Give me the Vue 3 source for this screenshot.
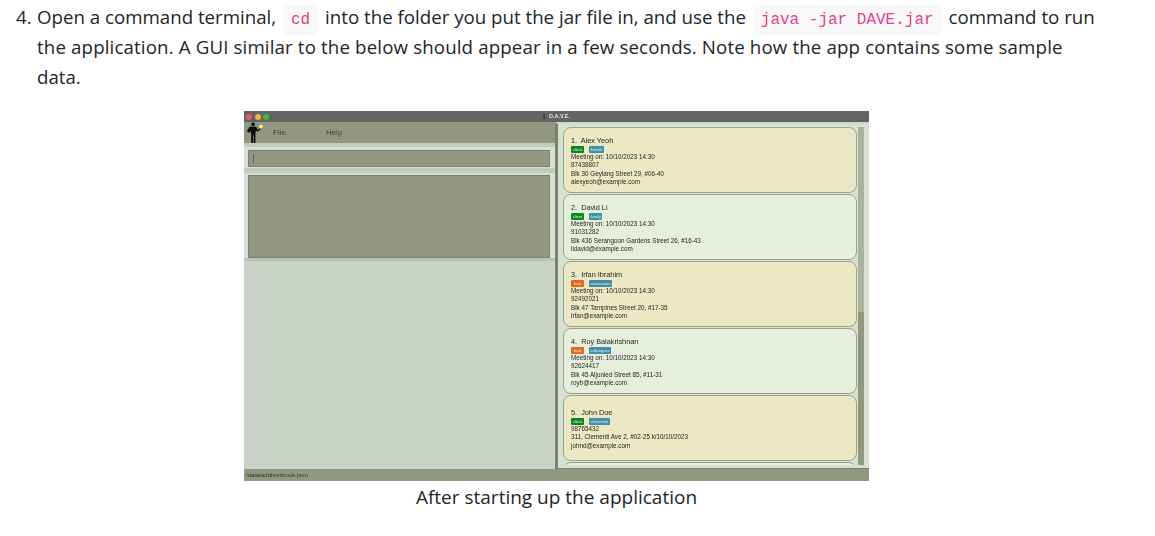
<script setup>
const cards = [
  { name: '1.  Alex Yeoh', tags: [['client', 'green'], ['friends', 'blue']], meeting: true, phone: '87438807', addr: 'Blk 30 Geylang Street 29, #06-40', mail: 'alexyeoh@example.com' },
  { name: '2.  David Li', tags: [['client', 'green'], ['family', 'blue']], meeting: true, phone: '91031282', addr: 'Blk 436 Serangoon Gardens Street 26, #16-43', mail: 'lidavid@example.com' },
  { name: '3.  Irfan Ibrahim', tags: [['lead', 'orange'], ['classmates', 'blue']], meeting: true, phone: '92492021', addr: 'Blk 47 Tampines Street 20, #17-35', mail: 'irfan@example.com' },
  { name: '4.  Roy Balakrishnan', tags: [['lead', 'orange'], ['colleagues', 'blue']], meeting: true, phone: '92624417', addr: 'Blk 45 Aljunied Street 85, #11-31', mail: 'royb@example.com' },
  { name: '5.  John Doe', tags: [['client', 'green'], ['classmate', 'blue']], meeting: false, phone: '98765432', addr: '311, Clementi Ave 2, #02-25 k/10/10/2023', mail: 'johnd@example.com' },
]
</script>

<template>
  <main class="page">
    <div class="step">
      <span class="num">4.</span>
      <p class="text">
        Open a command terminal, <code>cd</code> into the folder you put the jar file in, and use the
        <code>java -jar DAVE.jar</code> command to run<br />
        <span class="wide">the application. A GUI similar to the below should appear in a few seconds. Note how the app contains some sample</span><br />
        data.
      </p>
    </div>

    <figure class="fig">
      <div class="app">
        <div class="titlebar">
          <span class="dot red"></span>
          <span class="dot yellow"></span>
          <span class="dot green"></span>
          <svg class="tinylogo" viewBox="0 0 18 22" aria-hidden="true">
            <circle cx="8" cy="3" r="2.500" fill="#444" />
            <path d="M4 6h8v7l-1 9H5l-1-9z" fill="#444" />
          </svg>
          <span class="wintitle">D.A.V.E.</span>
        </div>

        <div class="body">
          <div class="left">
            <div class="menu">
              <svg class="logo" viewBox="0 0 18 22" aria-hidden="true">
                <circle cx="7.500" cy="2.400" r="1.900" fill="#0c0c0c" />
                <path d="M3.800 5h7.200l1.200 3.200 2.800-1.700.6 1-3.600 2.700-1.500-1.200-.5 3.500V22H8.200v-8h-.8v8H5.500v-9.500l-.5-3-1.800 2L1 9.300z" fill="#0c0c0c" />
                <circle cx="15.800" cy="4.600" r="2" fill="#f7e48a" />
              </svg>
              <span class="menuitem file">File</span>
              <span class="menuitem">Help</span>
            </div>
            <div class="band first-band">
              <div class="cmd"><span class="caret"></span></div>
            </div>
            <div class="band result-band">
              <div class="result"></div>
            </div>
            <div class="empty"></div>
          </div>

          <div class="right">
            <div class="list">
              <div v-for="(c, i) in cards" :key="c.name" class="card" :class="i % 2 ? 'even' : 'odd'">
                <div class="name">{{ c.name }}</div>
                <div class="tags">
                  <span v-for="t in c.tags" :key="t[0]" class="tag" :class="t[1]">{{ t[0] }}</span>
                </div>
                <div v-if="c.meeting" class="line">Meeting on: 10/10/2023 14:30</div>
                <div class="line">{{ c.phone }}</div>
                <div class="line">{{ c.addr }}</div>
                <div class="line">{{ c.mail }}</div>
              </div>
              <div class="card even"></div>
            </div>
            <div class="track"><div class="thumb"></div></div>
          </div>
        </div>

        <div class="status">/data/addressbook.json</div>
      </div>
      <figcaption class="cap">After starting up the application</figcaption>
    </figure>
  </main>
</template>

<style>
body {
  background: #fff;
}
</style>

<style scoped>
.page {
  width: 1155px;
  height: 536px;
  overflow: hidden;
  font-family: "Open Sans", "Noto Sans", sans-serif;
  color: #212529;
}
.step {
  position: relative;
  padding: 2px 0 0 37px;
  width: 1062px;
}
.num {
  position: absolute;
  left: 16px;
  top: 2px;
  font-size: 18.700px;
  line-height: 30px;
}
.text {
  margin: 0;
  font-size: 18.700px;
  line-height: 30px;
}
.wide {
  letter-spacing: 0.14px;
}
code {
  font-family: "Liberation Mono", monospace;
  font-size: 16px;
  line-height: 20px;
  color: #e83e8c;
  background: #f8f8f8;
  border-radius: 4px;
  padding: 6px 8px;
  margin: 0 2px;
}
.fig {
  margin: 19px 0 0;
  width: 1113px;
  display: flex;
  flex-direction: column;
  align-items: center;
}
.app {
  width: 625px;
  height: 370px;
  display: flex;
  flex-direction: column;
  font-family: "Liberation Sans", sans-serif;
  background: #c8d2c6;
  filter: blur(0.5px);
}
.titlebar {
  position: relative;
  height: 11px;
  flex: none;
  display: flex;
  align-items: center;
  gap: 2.500px;
  padding-left: 2px;
  background: #636363;
}
.dot {
  width: 6px;
  height: 6px;
  border-radius: 50%;
}
.red { background: #f05a55; }
.yellow { background: #f3b32c; }
.green { background: #32c03f; }
.tinylogo {
  position: absolute;
  left: 298px;
  top: 2px;
  width: 5px;
  height: 7px;
}
.wintitle {
  position: absolute;
  left: 305px;
  top: 2px;
  font-size: 5.500px;
  font-weight: 700;
  line-height: 7px;
  color: #e2e2e2;
}
.body {
  flex: 1;
  min-height: 0;
  display: flex;
}
.left {
  width: 311px;
  display: flex;
  flex-direction: column;
}
.menu {
  height: 21px;
  flex: none;
  display: flex;
  align-items: center;
  background: #92987f;
}
.logo {
  width: 17px;
  height: 21px;
  margin-left: 2px;
  flex: none;
}
.menuitem {
  font-size: 8px;
  color: #3d4036;
  margin-left: 40px;
}
.menuitem.file {
  margin-left: 10px;
}
.band {
  background: #d6e0d3;
  padding: 2px 5px 1px 4px;
}
.first-band {
  border-top: 4px solid #c0ccbd;
  padding-top: 3px;
}
.cmd {
  height: 17px;
  background: #92987f;
  border: 1px solid #788070;
  display: flex;
  align-items: center;
  padding-left: 4px;
  box-sizing: border-box;
}
.caret {
  width: 1px;
  height: 9px;
  background: #5d6255;
}
.result-band {
  padding-top: 2px;
  padding-bottom: 0;
  border-top: 5px solid #c0ccbd;
  border-bottom: 3px solid #b8c4b5;
}
.result {
  height: 83px;
  background: #92987f;
  border: 1px solid #788070;
  box-sizing: border-box;
}
.empty {
  flex: 1;
}
.right {
  flex: 1;
  min-width: 0;
  display: flex;
  background: #d6e0d3;
  border-left: 3px solid #7c826d;
  border-top: 2px solid #cfd9cc;
  border-bottom: 1px solid #7c826d;
  padding: 3px 0 3px 5px;
}
.list {
  width: 294px;
  flex: none;
  display: flex;
  flex-direction: column;
  gap: 1px;
  overflow: hidden;
}
.card {
  height: 66px;
  flex: none;
  box-sizing: border-box;
  border: 1px solid #9ea48c;
  border-radius: 8px;
  padding: 2px 7px 0;
  display: flex;
  flex-direction: column;
  justify-content: center;
  color: #262626;
}
.odd { background: #ece8c4; }
.even { background: #e5efdb; }
.name {
  font-size: 7.300px;
  line-height: 9px;
  margin-bottom: 1px;
  white-space: pre;
}
.tags {
  display: flex;
  gap: 5px;
  height: 7px;
  flex: none;
}
.tag {
  font-size: 4px;
  line-height: 7px;
  padding: 0 1.500px;
  border-radius: 1px;
  color: #dfeedf;
  min-width: 10px;
  text-align: center;
}
.tag.green { background: #0a8a1e; }
.tag.orange { background: #e8671c; }
.tag.blue { background: #3f8fab; }
.line {
  font-size: 6.300px;
  line-height: 8.300px;
  white-space: nowrap;
}
.track {
  width: 6px;
  margin-left: 1px;
  background: #92987f;
  flex: none;
}
.thumb {
  height: 185px;
  background: #a9b39b;
}
.status {
  height: 12px;
  flex: none;
  background: #92987f;
  font-size: 6px;
  line-height: 12px;
  padding-left: 2px;
  color: #33362d;
}
.cap {
  font-size: 19px;
  line-height: 30px;
  margin-top: 1px;
}
</style>
